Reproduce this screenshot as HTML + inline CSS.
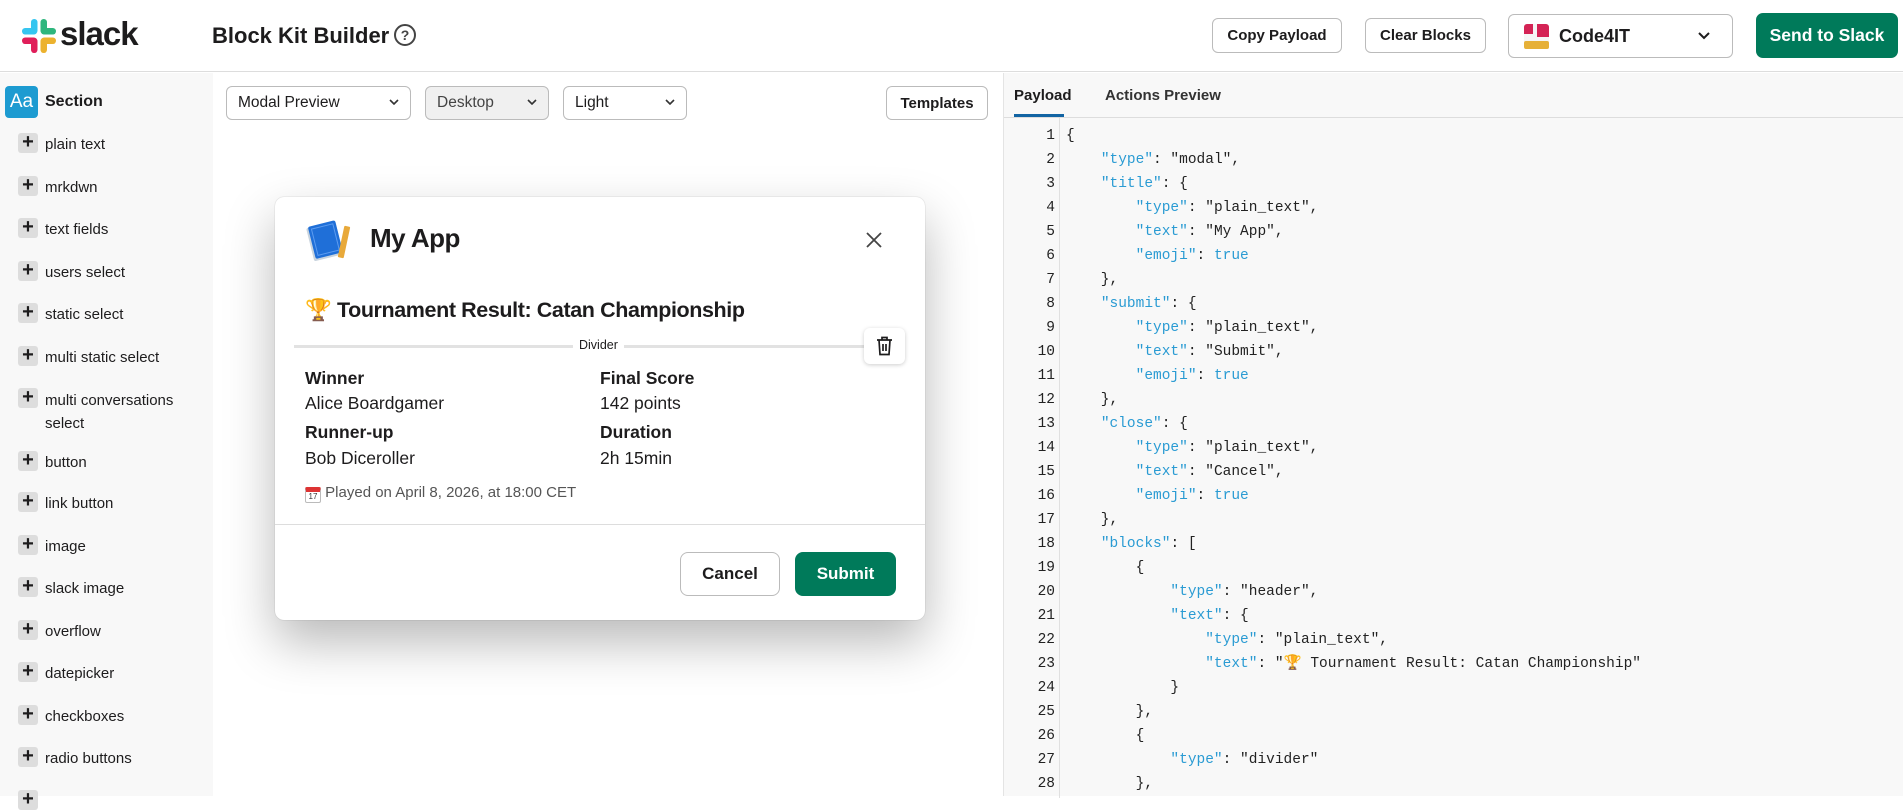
<!DOCTYPE html>
<html><head><meta charset="utf-8">
<style>
*{box-sizing:border-box;margin:0;padding:0}
body{width:1903px;height:796px;overflow:hidden;font-family:"Liberation Sans",sans-serif;color:#1d1c1d;background:#fff;position:relative}
.abs{position:absolute}
.hdr{position:absolute;left:0;top:0;width:1903px;height:72px;border-bottom:1px solid #ddd;background:#fff}
.btn{position:absolute;border:1px solid #bbb;border-radius:6px;background:#fff;font-weight:bold;font-size:15px;display:flex;align-items:center;justify-content:center}
.side{position:absolute;left:0;top:73px;width:213px;height:723px;background:#f8f8f8}
.item{position:absolute;left:18px;font-size:15px;color:#1d1c1d}
.item .p{position:absolute;left:0;top:0;width:20px;height:20px;background:#ddd;border-radius:3px;font-weight:bold;font-size:20px;line-height:19px;text-align:center}
.item .t{position:absolute;left:27px;top:1px;white-space:nowrap;line-height:22px}
.dd{position:absolute;top:86px;height:34px;border:1px solid #bbb;border-radius:6px;font-size:15.5px;padding-left:11px;line-height:32px}
.dd svg{position:absolute;right:11px;top:12px}
.pay{position:absolute;left:1003px;top:73px;width:900px;height:723px;background:#f8f8f8;border-left:1px solid #e4e4e4}
.code{position:absolute;left:1066px;top:124px;font-family:"Liberation Mono",monospace;font-size:14.5px;line-height:24px;white-space:pre;color:#222}
.ln{position:absolute;left:1003px;width:52px;top:124px;font-family:"Liberation Mono",monospace;font-size:14.5px;line-height:24px;text-align:right;color:#222;white-space:pre}
.k{color:#2a9bd3}.b{color:#2a9bd3}
.modal{position:absolute;left:275px;top:197px;width:650px;height:423px;background:#fff;border-radius:9px;box-shadow:0 22px 50px rgba(0,0,0,.28),0 0 1px rgba(0,0,0,.3)}
.f{position:absolute;font-size:17.5px;color:#1d1c1d}
.fb{font-weight:bold}
</style></head><body>
<div class="hdr">
  <svg class="abs" style="left:22px;top:19px" width="34" height="34" viewBox="0 0 34 34">
    <rect x="9" y="0" width="6.5" height="15" rx="3.2" fill="#36c5f0"/>
    <rect x="0" y="9" width="15" height="6.5" rx="3.2" fill="#36c5f0"/>
    <rect x="18.5" y="0" width="6.5" height="15" rx="3.2" fill="#2eb67d"/>
    <rect x="19" y="9" width="15" height="6.5" rx="3.2" fill="#2eb67d"/>
    <rect x="0" y="18.5" width="15" height="6.5" rx="3.2" fill="#e01e5a"/>
    <rect x="9" y="19" width="6.5" height="15" rx="3.2" fill="#e01e5a"/>
    <rect x="19" y="18.5" width="15" height="6.5" rx="3.2" fill="#ecb22e"/>
    <rect x="18.5" y="19" width="6.5" height="15" rx="3.2" fill="#ecb22e"/>
  </svg>
  <div class="abs" style="left:60px;top:15px;font-size:33px;font-weight:bold;letter-spacing:-1px;color:#1d1c1d">slack</div>
  <div class="abs" style="left:212px;top:23px;font-size:22px;font-weight:bold;color:#1d1c1d">Block Kit Builder</div>
  <div class="abs" style="left:394px;top:24px;width:22px;height:22px;border:2px solid #444;border-radius:50%;font-size:14px;font-weight:bold;text-align:center;line-height:18px;color:#444">?</div>
  <div class="btn" style="left:1212px;top:18px;width:130px;height:35px">Copy Payload</div>
  <div class="btn" style="left:1365px;top:18px;width:121px;height:35px">Clear Blocks</div>
  <div class="btn" style="left:1508px;top:14px;width:225px;height:44px;justify-content:flex-start;padding-left:15px;font-size:18px">
    <svg width="25" height="25" viewBox="0 0 25 25" style="margin-right:10px"><rect width="25" height="25" rx="3" fill="#f5f5f5"/><rect x="0" y="17" width="25" height="8" rx="2" fill="#e6b038"/><path d="M0 3a3 3 0 0 1 3-3h6v10H0z" fill="#d42355"/><path d="M13 0h9a3 3 0 0 1 3 3v10H13z" fill="#d42355"/></svg>Code4IT
    <svg class="abs" style="right:22px;top:17px" width="12" height="8" viewBox="0 0 12 8"><path d="M1 1l5 5 5-5" stroke="#1d1c1d" stroke-width="2" fill="none"/></svg>
  </div>
  <div class="btn" style="left:1756px;top:13px;width:142px;height:45px;background:#007a5a;border-color:#007a5a;color:#fff;font-size:17.5px;border-radius:7px">Send to Slack</div>
</div>

<div class="side">
  <div class="abs" style="left:5px;top:13px;width:33px;height:32px;background:#1d9bd1;border-radius:4px;color:#fff;font-size:19px;text-align:center;line-height:32px">Aa</div>
  <div class="abs" style="left:45px;top:20px;font-size:16px;font-weight:bold">Section</div>
</div>
<div class="item" style="top:133px"><div class="p">+</div><div class="t">plain text</div></div>
<div class="item" style="top:176px"><div class="p">+</div><div class="t">mrkdwn</div></div>
<div class="item" style="top:218px"><div class="p">+</div><div class="t">text fields</div></div>
<div class="item" style="top:261px"><div class="p">+</div><div class="t">users select</div></div>
<div class="item" style="top:303px"><div class="p">+</div><div class="t">static select</div></div>
<div class="item" style="top:346px"><div class="p">+</div><div class="t">multi static select</div></div>
<div class="item" style="top:388px"><div class="p">+</div><div class="t" style="white-space:normal;width:150px;line-height:23px">multi conversations select</div></div>
<div class="item" style="top:451px"><div class="p">+</div><div class="t">button</div></div>
<div class="item" style="top:492px"><div class="p">+</div><div class="t">link button</div></div>
<div class="item" style="top:535px"><div class="p">+</div><div class="t">image</div></div>
<div class="item" style="top:577px"><div class="p">+</div><div class="t">slack image</div></div>
<div class="item" style="top:620px"><div class="p">+</div><div class="t">overflow</div></div>
<div class="item" style="top:662px"><div class="p">+</div><div class="t">datepicker</div></div>
<div class="item" style="top:705px"><div class="p">+</div><div class="t">checkboxes</div></div>
<div class="item" style="top:747px"><div class="p">+</div><div class="t">radio buttons</div></div>
<div class="item" style="top:790px"><div class="p">+</div></div>

<div class="dd" style="left:226px;width:185px">Modal Preview<svg width="10" height="6" viewBox="0 0 10 6"><path d="M1 1l4 4 4-4" stroke="#333" stroke-width="1.6" fill="none"/></svg></div>
<div class="dd" style="left:425px;width:124px;background:#f0f0f0;color:#444">Desktop<svg width="10" height="6" viewBox="0 0 10 6"><path d="M1 1l4 4 4-4" stroke="#333" stroke-width="1.6" fill="none"/></svg></div>
<div class="dd" style="left:563px;width:124px">Light<svg width="10" height="6" viewBox="0 0 10 6"><path d="M1 1l4 4 4-4" stroke="#333" stroke-width="1.6" fill="none"/></svg></div>
<div class="btn" style="left:886px;top:86px;width:102px;height:34px">Templates</div>

<div class="modal">
  <svg class="abs" style="left:31px;top:23px" width="46" height="42" viewBox="0 0 46 42">
    <g transform="rotate(-14 20 22)"><rect x="4" y="4" width="30" height="34" rx="2" fill="#c9d4de"/><rect x="6" y="3" width="28" height="33" rx="2" fill="#1f6fd8"/><rect x="9" y="6" width="22" height="27" fill="none" stroke="#5d9cf0" stroke-width="1"/></g>
    <rect x="35" y="6" width="6" height="32" rx="1" fill="#e8a93a" transform="rotate(12 38 22)"/>
  </svg>
  <div class="abs" style="left:95px;top:26px;font-size:26px;font-weight:bold;letter-spacing:-0.5px">My App</div>
  <svg class="abs" style="left:590px;top:34px" width="18" height="18" viewBox="0 0 18 18"><path d="M2 2l14 14M16 2L2 16" stroke="#444" stroke-width="1.8"/></svg>
  <div class="abs" style="left:30px;top:101px;font-size:21.5px;font-weight:bold;letter-spacing:-0.4px;white-space:nowrap"><span style="font-family:'Noto Color Emoji','DejaVu Sans',sans-serif;color:#d49a1a">🏆</span> Tournament Result: Catan Championship</div>
  <div class="abs" style="left:19px;top:148px;width:570px;height:3px;background:#e2e2e2"></div>
  <div class="abs" style="left:298px;top:141px;background:#fff;padding:0 6px;font-size:12.5px;color:#1d1c1d">Divider</div>
  <div class="abs" style="left:589px;top:131px;width:41px;height:36px;background:#fff;border-radius:6px;box-shadow:0 1px 4px rgba(0,0,0,.2)">
    <svg class="abs" style="left:12px;top:8px" width="17" height="20" viewBox="0 0 17 20"><path d="M1 4h15M6 4V1.5h5V4M3 4l1 14.5h9L14 4M7 8v7M10 8v7" stroke="#1d1c1d" stroke-width="1.7" fill="none"/></svg>
  </div>
  <div class="f fb" style="left:30px;top:171px">Winner</div>
  <div class="f" style="left:30px;top:196px">Alice Boardgamer</div>
  <div class="f fb" style="left:30px;top:225px">Runner-up</div>
  <div class="f" style="left:30px;top:251px">Bob Diceroller</div>
  <div class="f fb" style="left:325px;top:171px">Final Score</div>
  <div class="f" style="left:325px;top:196px">142 points</div>
  <div class="f fb" style="left:325px;top:225px">Duration</div>
  <div class="f" style="left:325px;top:251px">2h 15min</div>
  <div class="abs" style="left:30px;top:287px;font-size:15px;color:#555"><span style="display:inline-block;width:16px;height:16px;border:1px solid #bbb;border-top:5px solid #d33;border-radius:2px;font-size:8px;vertical-align:-2px;text-align:center;line-height:9px;color:#333">17</span> Played on April 8, 2026, at 18:00 CET</div>
  <div class="abs" style="left:0;top:327px;width:650px;height:1px;background:#ddd"></div>
  <div class="btn" style="left:405px;top:355px;width:100px;height:44px;font-size:17px;border-radius:8px">Cancel</div>
  <div class="btn" style="left:520px;top:355px;width:101px;height:44px;font-size:17px;border-radius:8px;background:#007a5a;border-color:#007a5a;color:#fff">Submit</div>
</div>

<div class="pay">
  <div class="abs" style="left:10px;top:14px;font-size:15px;font-weight:bold;color:#1d1c1d">Payload</div>
  <div class="abs" style="left:10px;top:41px;width:50px;height:3px;background:#1264a3"></div>
  <div class="abs" style="left:101px;top:14px;font-size:15px;font-weight:bold;color:#333">Actions Preview</div>
  <div class="abs" style="left:0;top:44px;width:900px;height:1px;background:#ddd"></div>
  <div class="abs" style="left:55px;top:45px;width:1px;height:680px;background:#e0e0e0"></div>
</div>
<div class="ln">1
2
3
4
5
6
7
8
9
10
11
12
13
14
15
16
17
18
19
20
21
22
23
24
25
26
27
28</div>
<div class="code">{
    <span class="k">"type"</span>: "modal",
    <span class="k">"title"</span>: {
        <span class="k">"type"</span>: "plain_text",
        <span class="k">"text"</span>: "My App",
        <span class="k">"emoji"</span>: <span class="b">true</span>
    },
    <span class="k">"submit"</span>: {
        <span class="k">"type"</span>: "plain_text",
        <span class="k">"text"</span>: "Submit",
        <span class="k">"emoji"</span>: <span class="b">true</span>
    },
    <span class="k">"close"</span>: {
        <span class="k">"type"</span>: "plain_text",
        <span class="k">"text"</span>: "Cancel",
        <span class="k">"emoji"</span>: <span class="b">true</span>
    },
    <span class="k">"blocks"</span>: [
        {
            <span class="k">"type"</span>: "header",
            <span class="k">"text"</span>: {
                <span class="k">"type"</span>: "plain_text",
                <span class="k">"text"</span>: "<span style="color:#c08a1a">🏆</span> Tournament Result: Catan Championship"
            }
        },
        {
            <span class="k">"type"</span>: "divider"
        },</div>
</body></html>
